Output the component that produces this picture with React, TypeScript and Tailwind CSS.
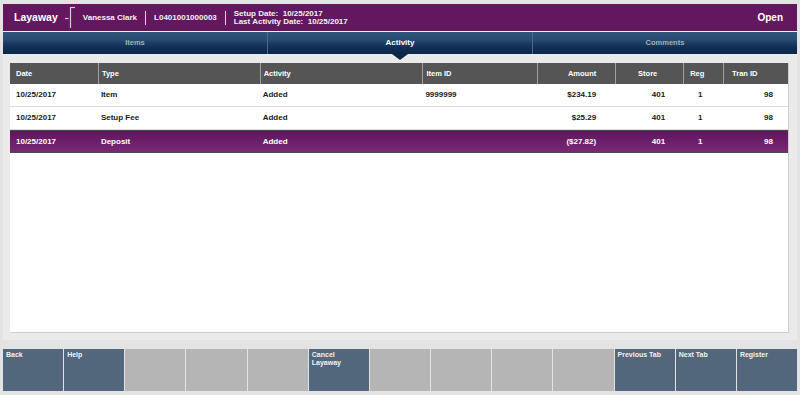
import React from "react";

type Col = {
  label: string;
  width: string;
  head: string;
  cell: string;
};

const cols: Col[] = [
  { label: "Date", width: "w-[88px]", head: "pl-[6px]", cell: "pl-[6px]" },
  { label: "Type", width: "w-[162px]", head: "pl-[3px]", cell: "pl-[3px]" },
  { label: "Activity", width: "w-[163px]", head: "pl-[3px]", cell: "pl-[3px]" },
  { label: "Item ID", width: "w-[115px]", head: "pl-[3px]", cell: "pl-[3px]" },
  { label: "Amount", width: "w-[78px]", head: "justify-end pr-[19px]", cell: "justify-end pr-[19px]" },
  { label: "Store", width: "w-[68px]", head: "justify-center pr-[4px]", cell: "justify-end pr-[18px]" },
  { label: "Reg", width: "w-[40px]", head: "pl-[6px]", cell: "pl-[15px]" },
  { label: "Tran ID", width: "w-[65px]", head: "pl-[8px]", cell: "justify-end pr-[15px]" },
];

const rows = [
  { cells: ["10/25/2017", "Item", "Added", "9999999", "$234.19", "401", "1", "98"], selected: false },
  { cells: ["10/25/2017", "Setup Fee", "Added", "", "$25.29", "401", "1", "98"], selected: false },
  { cells: ["10/25/2017", "Deposit", "Added", "", "($27.82)", "401", "1", "98"], selected: true },
];

const buttons = [
  "Back",
  "Help",
  "",
  "",
  "",
  "Cancel Layaway",
  "",
  "",
  "",
  "",
  "Previous Tab",
  "Next Tab",
  "Register",
];

const tabs = ["Items", "Activity", "Comments"];

const App = () => {
  return (
    <div className="w-[800px] h-[395px] bg-[#e3e3e3] font-['Liberation_Sans',Arial,sans-serif] pt-[4px] flex flex-col overflow-hidden">
      {/* header */}
      <div className="mx-[3px] h-[27px] bg-[#63175e] flex items-center pl-[11px] pr-[14px] text-white">
        <span className="text-[10.5px] font-bold">Layaway</span>
        <svg width="14" height="27" viewBox="0 0 14 27" className="ml-[5px] self-start">
          <line x1="2" y1="14.5" x2="5.5" y2="14.5" stroke="#cfcfcf" strokeWidth="1.2" />
          <line x1="7.5" y1="3" x2="7.5" y2="24" stroke="#cfcfcf" strokeWidth="1.2" />
          <line x1="7.5" y1="3.5" x2="12" y2="3.5" stroke="#cfcfcf" strokeWidth="1.2" />
        </svg>
        <span className="ml-[6px] text-[8px] font-bold text-[#f2f2f2]">Vanessa Clark</span>
        <span className="mx-[8px] w-px h-[14px] bg-[#d8d8d8]" />
        <span className="text-[8px] font-bold text-[#f2f2f2]">L0401001000003</span>
        <span className="mx-[8px] w-px h-[14px] bg-[#d8d8d8]" />
        <div className="flex flex-col text-[8px] font-bold leading-[8px] text-[#f2f2f2] pt-[1px]">
          <span>Setup Date:&nbsp; 10/25/2017</span>
          <span>Last Activity Date:&nbsp; 10/25/2017</span>
        </div>
        <span className="ml-auto text-[10px] font-bold">Open</span>
      </div>
      <div className="mx-[3px] h-px bg-[#f4eef4]" />

      {/* tabs */}
      <div className="mx-[3px] h-[22px] flex bg-[linear-gradient(#2f557a_0%,#294c71_35%,#1c3d63_50%,#102f55_70%,#0b2748_100%)]">
        {tabs.map((t, i) => (
          <div
            key={t}
            className={`relative flex-1 flex items-center justify-center font-bold ${
              i > 0 ? "border-l border-[#46698c]" : ""
            } ${t === "Activity" ? "text-white text-[8px]" : "text-[#a3b0be] text-[7.5px]"}`}
          >
            {t}
            {t === "Activity" && (
              <svg width="16" height="6" viewBox="0 0 16 6" className="absolute top-full left-1/2 -translate-x-1/2 z-10">
                <polygon points="0,0 16,0 8,6" fill="#0b2748" />
              </svg>
            )}
          </div>
        ))}
      </div>

      {/* content panel */}
      <div className="mx-[3px] h-[286px] bg-[#eaeaea] pt-[9px] pl-[7px] pr-[8px] pb-[7px]">
        <div className="h-full bg-white border border-[#cfcfcf] border-t-0 border-l-0 flex flex-col">
          <div className="flex h-[21px] bg-[#555555] text-white text-[7.5px] font-bold">
            {cols.map((c, i) => (
              <div
                key={c.label}
                className={`${c.width} flex items-center ${c.head} ${i > 0 ? "border-l border-[#a0a0a0]" : ""}`}
              >
                {c.label}
              </div>
            ))}
          </div>
          {rows.map((r, ri) => (
            <div
              key={ri}
              className={`flex h-[23px] text-[8px] font-bold ${
                r.selected
                  ? "bg-[linear-gradient(#5e165b,#7a2777)] text-white border-y border-[#4a4a4a]"
                  : "text-[#1a1a1a] border-b border-[#dcdcdc]"
              }`}
            >
              {r.cells.map((v, ci) => (
                <div key={ci} className={`${cols[ci].width} flex items-center ${cols[ci].cell}`}>
                  {v}
                </div>
              ))}
            </div>
          ))}
        </div>
      </div>

      {/* buttons */}
      <div className="mx-[3px] mt-[9px] h-[42px] flex gap-px">
        {buttons.map((b, i) => (
          <div
            key={i}
            className={`flex-1 px-[3px] pt-[2px] text-[7px] font-bold leading-[8px] text-[#f2f2f2] ${
              b ? "bg-[#52667c]" : "bg-[#b5b5b5]"
            }`}
          >
            {b === "Cancel Layaway" ? (
              <>
                Cancel
                <br />
                Layaway
              </>
            ) : (
              b
            )}
          </div>
        ))}
      </div>
    </div>
  );
};

export default App;
